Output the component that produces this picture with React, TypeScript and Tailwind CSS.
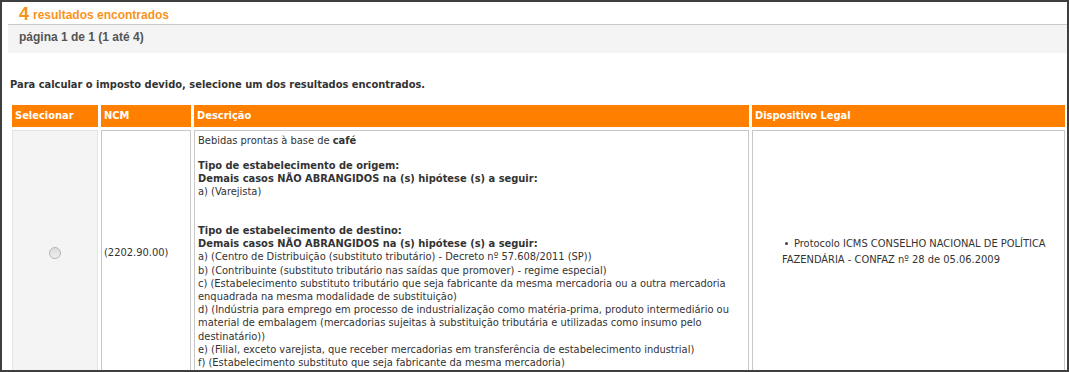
export default function App() {
  const desc = "font-['DejaVu_Sans_Condensed','Liberation_Sans',sans-serif]";
  return (
    <div className="h-[372px] w-[1069px] overflow-hidden border-2 border-[#3f3f3f] bg-white">
      <div className="pl-[6px]">
        <div className="flex h-[22px] items-end gap-[4px] pl-[11px] font-['Liberation_Sans',Arial,sans-serif] font-bold text-[#f7941d]">
          <span className="text-[18px] leading-[20px]">4</span>
          <span className="text-[12px] leading-[18px]">resultados encontrados</span>
        </div>
        <div className="border-t border-[#c8c8c8] bg-[#f4f4f4] pb-[4px] pl-[11px] font-['Liberation_Sans',Arial,sans-serif] text-[12px] font-bold leading-[24px] text-[#555]">
          página 1 de 1 (1 até 4)
        </div>
      </div>

      <p className={`${desc} mt-[25px] pl-[8px] text-[11px] leading-[14px] font-bold text-[#333]`}>
        Para calcular o imposto devido, selecione um dos resultados encontrados.
      </p>

      <div className={`${desc} mt-[13px] ml-[10px] grid grid-cols-[86px_90px_555px_313px] gap-[3px] text-[11px] text-[#333]`}>
        <div className="h-[22px] bg-[#ff8000] pl-[3px] font-bold leading-[22px] text-white">Selecionar</div>
        <div className="h-[22px] bg-[#ff8000] pl-[3px] font-bold leading-[22px] text-white">NCM</div>
        <div className="h-[22px] bg-[#ff8000] pl-[3px] font-bold leading-[22px] text-white">Descrição</div>
        <div className="h-[22px] bg-[#ff8000] pl-[3px] font-bold leading-[22px] text-white">Dispositivo Legal</div>

        <div className="flex items-center justify-center border border-[#e4e4e4] bg-[#f4f4f4]">
          <span className="h-[12px] w-[12px] rounded-full border border-[#b4b4b4] bg-gradient-to-b from-[#dcdcdc] to-[#eeeeee]" />
        </div>
        <div className="flex items-center border border-[#c8c8c8] pl-[2px]">(2202.90.00)</div>
        <div className="border border-[#c8c8c8] px-[3px] pt-[3px] pb-[6px] leading-[13.2px] whitespace-nowrap">
          <div>
            Bebidas prontas à base de <b>café</b>
          </div>
          <div className="h-[11.75px]" />
          <div className="font-bold">Tipo de estabelecimento de origem:</div>
          <div className="font-bold">Demais casos NÃO ABRANGIDOS na (s) hipótese (s) a seguir:</div>
          <div>a) (Varejista)</div>
          <div className="h-[25.5px]" />
          <div className="font-bold">Tipo de estabelecimento de destino:</div>
          <div className="font-bold">Demais casos NÃO ABRANGIDOS na (s) hipótese (s) a seguir:</div>
          <div>a) (Centro de Distribuição (substituto tributário) - Decreto nº 57.608/2011 (SP))</div>
          <div>b) (Contribuinte (substituto tributário nas saídas que promover) - regime especial)</div>
          <div>c) (Estabelecimento substituto tributário que seja fabricante da mesma mercadoria ou a outra mercadoria</div>
          <div>enquadrada na mesma modalidade de substituição)</div>
          <div>d) (Indústria para emprego em processo de industrialização como matéria-prima, produto intermediário ou</div>
          <div>material de embalagem (mercadorias sujeitas à substituição tributária e utilizadas como insumo pelo</div>
          <div>destinatário))</div>
          <div>e) (Filial, exceto varejista, que receber mercadorias em transferência de estabelecimento industrial)</div>
          <div>f) (Estabelecimento substituto que seja fabricante da mesma mercadoria)</div>
        </div>
        <div className="flex items-center border border-[#c8c8c8] pl-[29px] leading-[16px]">
          <div className="-translate-y-[1px]">
            <span className="mr-[6px] ml-[3px] inline-block h-[3px] w-[3px] translate-y-[-2px] rounded-full bg-[#444]" />
            Protocolo ICMS CONSELHO NACIONAL DE POLÍTICA
            <br />
            FAZENDÁRIA - CONFAZ nº 28 de 05.06.2009
          </div>
        </div>
      </div>
    </div>
  );
}
